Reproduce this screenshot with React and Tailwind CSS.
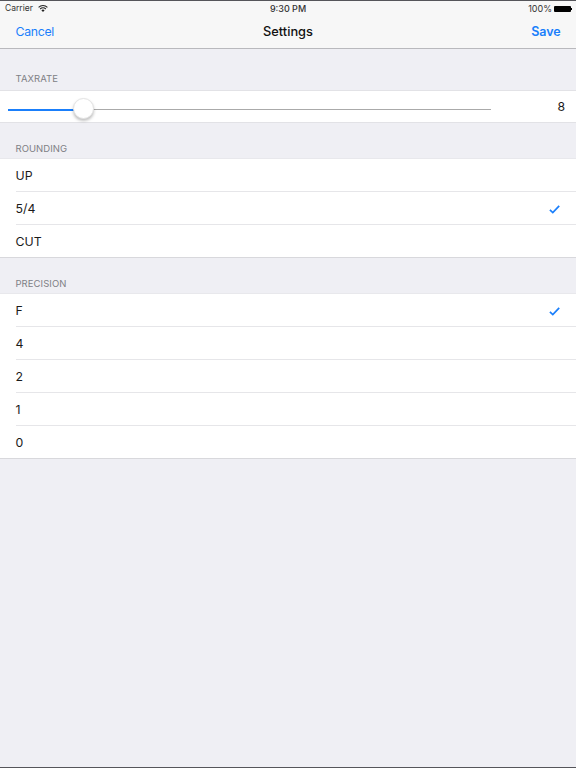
const rounding = [
  { label: "UP" },
  { label: "5/4", checked: true },
  { label: "CUT" },
];

const precision = [
  { label: "F", checked: true },
  { label: "4" },
  { label: "2" },
  { label: "1" },
  { label: "0" },
];

function Check() {
  return (
    <svg width="11" height="9" viewBox="0 0 11 9" fill="none" className="block">
      <path d="M0.9 4.9 L3.8 7.6 L10.2 0.9" stroke="#1a7ffb" strokeWidth="1.7" />
    </svg>
  );
}

function SectionLabel({ children, className }) {
  return (
    <div className={`flex items-end pl-[15.5px] text-[9.5px] leading-[12px] tracking-[0.05px] text-[#808085] ${className}`}>
      {children}
    </div>
  );
}

function Rows({ items }) {
  return (
    <div className="bg-white border-t border-[#e8e8ec]">
      {items.map((item, i) => (
        <div key={item.label} className={i === items.length - 1 ? "pl-[15.5px] border-b border-[#d8d8dc]" : "pl-[15.5px]"}>
          <div className={`flex items-center justify-between pt-[2px] pr-[16px] text-[12.3px] text-[#1a1a1a] ${i < items.length - 1 ? "h-[33px] border-b border-[#e6e6e9]" : "h-[32px]"}`}>
            <span>{item.label}</span>
            {item.checked && <Check />}
          </div>
        </div>
      ))}
    </div>
  );
}

export default function App() {
  return (
    <div className="flex h-[768px] flex-col overflow-hidden border-y border-[#55555a] bg-[#efeff4] antialiased [font-family:Inter,'Liberation_Sans',sans-serif]">
      {/* Nav bar */}
      <div className="h-[48px] shrink-0 border-b border-[#b9b9bd] bg-[#f7f7f7]">
        <div className="relative flex h-[15px] items-center justify-between pl-[5px] pr-[4px] text-[8.5px] text-[#333]">
          <div className="flex items-center gap-[5px]">
            <span>Carrier</span>
            <svg width="10" height="7" viewBox="0 0 10 7" fill="none" stroke="#222" strokeWidth="1.1">
              <path d="M0.6 2.4 A6.2 6.2 0 0 1 9.4 2.4" />
              <path d="M2.2 4 A3.9 3.9 0 0 1 7.8 4" />
              <path d="M5 6.9 L3.4 5.2 A2.3 2.3 0 0 1 6.6 5.2 Z" fill="#222" stroke="none" />
            </svg>
          </div>
          <span className="absolute left-0 right-0 text-center text-[9px] font-medium">9:30 PM</span>
          <div className="flex items-center gap-[2px]">
            <span className="text-[9px]">100%</span>
            <span className="h-[6px] w-[17px] rounded-[1px] bg-black" />
            <span className="-ml-[2px] h-[2px] w-[1px] bg-black" />
          </div>
        </div>
        <div className="relative flex h-[32px] items-center justify-between px-[15.5px] text-[12.5px]">
          <span className="text-[12.3px] tracking-[-0.3px] text-[#1a7ffb]">Cancel</span>
          <span className="absolute left-0 right-0 text-center text-[12.8px] font-medium text-[#111]">Settings</span>
          <span className="font-semibold tracking-[-0.1px] text-[#1a7ffb]">Save</span>
        </div>
      </div>

      <SectionLabel className="h-[41px] pb-[5px]">TAXRATE</SectionLabel>
      {/* Tax rate slider */}
      <div className="flex h-[33px] items-center bg-white border-y border-[#e2e2e6] pl-[8px] pr-[11px]">
        <div className="relative mt-[6px] h-[1px] w-[483px] bg-[#aaaaaa]">
          <div className="h-[2px] w-[76px] bg-[#1a7ffb]" />
          <div className="absolute left-[65px] -top-[11px] h-[21px] w-[21px] rounded-full border border-[#e4e4e4] bg-white shadow-[0_2px_3px_rgba(0,0,0,0.25)]" />
        </div>
        <span className="ml-auto pt-[1px] text-[12.3px] text-[#1a1a1a]">8</span>
      </div>

      <SectionLabel className="h-[35px] pb-[3px]">ROUNDING</SectionLabel>
      <Rows items={rounding} />

      <SectionLabel className="h-[35px] pb-[3px]">PRECISION</SectionLabel>
      <Rows items={precision} />
    </div>
  );
}
